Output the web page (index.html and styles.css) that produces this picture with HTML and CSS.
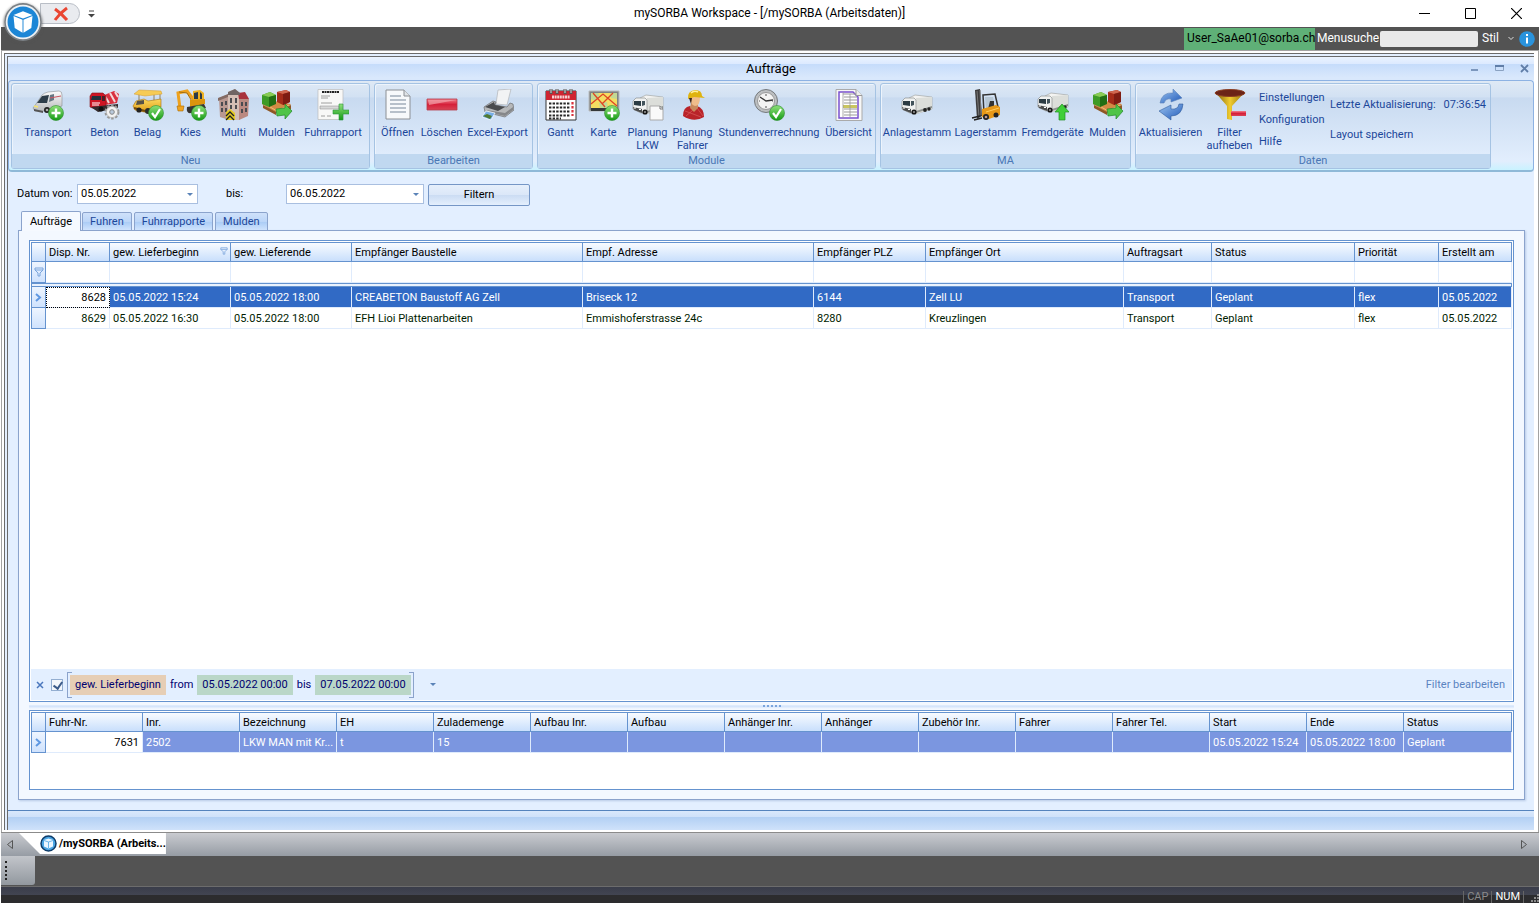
FILE: index.html
```html
<!DOCTYPE html>
<html lang="de">
<head>
    <meta charset="UTF-8">
    <title>mySORBA Workspace</title>
    <link rel="stylesheet" href="styles.css">
</head>
<body>
    <!-- icon sprite -->
    <svg class="sprite" width="0" height="0" aria-hidden="true">
        <defs>
            <linearGradient id="gGreen" x1="0" y1="0" x2="0" y2="1"><stop offset="0" stop-color="#8fe07a"/><stop offset="1" stop-color="#149a14"/></linearGradient>
            <linearGradient id="gRed" x1="0" y1="0" x2="0" y2="1"><stop offset="0" stop-color="#f2808c"/><stop offset=".5" stop-color="#d6203a"/><stop offset="1" stop-color="#d84455"/></linearGradient>
            <linearGradient id="gBlue" x1="0" y1="0" x2="1" y2="1"><stop offset="0" stop-color="#9cc4f0"/><stop offset="1" stop-color="#1f58b8"/></linearGradient>
            <linearGradient id="gGray" x1="0" y1="0" x2="0" y2="1"><stop offset="0" stop-color="#fdfdfd"/><stop offset="1" stop-color="#b8babd"/></linearGradient>
            <linearGradient id="gGold" x1="0" y1="0" x2="1" y2="0"><stop offset="0" stop-color="#7a5a05"/><stop offset=".5" stop-color="#f0cc30"/><stop offset="1" stop-color="#8a6a08"/></linearGradient>
            <linearGradient id="gYellow" x1="0" y1="0" x2="0" y2="1"><stop offset="0" stop-color="#fbd85e"/><stop offset="1" stop-color="#e09a12"/></linearGradient>
            <g id="bPlus"><circle cx="24" cy="24" r="7.5" fill="url(#gGreen)" stroke="#2f8f2f" stroke-width=".6"/><path d="M24 19.5v9M19.5 24h9" stroke="#fff" stroke-width="2.4"/></g>
            <g id="bCheck"><circle cx="24" cy="24" r="7.5" fill="url(#gGreen)" stroke="#2f8f2f" stroke-width=".6"/><path d="M20 24l3 4 5-8" stroke="#fff" stroke-width="2.2" fill="none"/></g>
            <g id="truckBody"><path d="M8 9l6-3 17 2v12l-17 5-6-4z" fill="#f4f4f2" stroke="#a3a6a5" stroke-width=".7"/><path d="M15 9l16-1v12l-16 5z" fill="#dcdeda"/><path d="M15 22l16-5v2l-16 5z" fill="#8f9391"/><path d="M1 12l3-3h9l2 2v12l-6 1-8-4z" fill="#f0f1f0" stroke="#8d9190" stroke-width=".7"/><path d="M2 12h7v5l-7-1z" fill="#2b3b43"/><path d="M10 12h3v4l-3 1z" fill="#42535b"/><path d="M1 18l9 2v4l-8-3z" fill="#4b4d4e"/><path d="M2 19h2M7 20.500h2" stroke="#fff"/><circle cx="13" cy="23" r="2.6" fill="#161616"/><circle cx="13" cy="23" r="1" fill="#999"/><circle cx="24" cy="21" r="1.9" fill="#222"/><circle cx="28" cy="20" r="1.7" fill="#222"/></g>
        </defs>
        <symbol id="van" viewBox="0 0 32 32"><path d="M1 19l3-4 6-9q2-2 6-3l11-1q3 0 3 4v11l-13 5-14 0z" fill="url(#gGray)" stroke="#8a8e92" stroke-width=".6"/><path d="M5 14l5-7 7-1-2 8z" fill="#2d3d49"/><path d="M18 6l4-1v6l-5 2z" fill="#667783"/><path d="M18 9l11-2" stroke="#cb5560"/><path d="M2 20l9 2v2l-9-2z" fill="#555"/><path d="M2 17l4 1" stroke="#f5e46e" stroke-width="1.5"/><circle cx="15" cy="21" r="3" fill="#222"/><circle cx="15" cy="21" r="1.3" fill="#aaa"/><use href="#bPlus"/></symbol>
        <symbol id="mixer" viewBox="0 0 32 32"><path d="M13 7l12-5 5 3-2 9-12 2z" fill="#d9303f"/><path d="M16 7l4 7M21 4l5 9M26 3l3 5" stroke="#f3d8d8" stroke-width="2"/><path d="M1 7l2-3h11l3 3v11l-11 2-5-2z" fill="#cf1524" stroke="#84101a" stroke-width=".6"/><path d="M3 7h9v4H2z" fill="#24313c"/><path d="M13 7h3v5h-3z" fill="#4a2026"/><path d="M3 14h8M3 16h7" stroke="#fff"/><path d="M2 18l27-3v4l-20 4z" fill="#332b2d"/><circle cx="12" cy="20" r="2.5" fill="#111"/><circle cx="23" cy="23" r="6" fill="#eee" stroke="#999" stroke-width="3" stroke-dasharray="2.4 1.4"/><circle cx="23" cy="23" r="5.6" fill="#f2f2f2" stroke="#aaa" stroke-width=".6"/><circle cx="23" cy="23" r="2.3" fill="#b9c9dc" stroke="#888"/></symbol>
        <symbol id="paver" viewBox="0 0 32 32"><path d="M7 5v9M22 5v10M28 4v10" stroke="#8f8060"/><path d="M2 5l5-4 22 1 1 3-17 2z" fill="#f6cb55" stroke="#d49a2a" stroke-width=".5"/><path d="M1 17l3-5 8-2 4 2 13-2v8l-12 6-14-3z" fill="url(#gYellow)" stroke="#a8710d" stroke-width=".6"/><path d="M5 12l7-1v4l-8 1z" fill="#575248"/><path d="M2 19l11 3" stroke="#754c0b" stroke-width="2"/><circle cx="7" cy="21" r="2.6" fill="#222"/><circle cx="16" cy="22" r="3" fill="#2c2c2c"/><use href="#bCheck"/></symbol>
        <symbol id="digger" viewBox="0 0 32 32"><path d="M5 19L3 4l9-2 7 9" fill="none" stroke="#eda11e" stroke-width="3"/><path d="M4 3l8 1 6 10" stroke="#a66d0b" fill="none"/><path d="M2 17h7l-1 5H3z" fill="#f0a31e" stroke="#a86b08" stroke-width=".6"/><path d="M18 2l7-1 4 3v8H18z" fill="#efb324"/><path d="M19 4l4-1v7h-4zM25 3l2 2v5h-2z" fill="#2e3b46"/><path d="M15 11l15-1v5l-15 3z" fill="#dc940d"/><path d="M12 18l17-3 2 4-15 5q-5 1-4-6z" fill="#383431"/><use href="#bPlus"/></symbol>
        <symbol id="house" viewBox="0 0 32 32"><path d="M1 9l10-4v26L2 28z" fill="#b99891"/><path d="M10 3l7-3 5 4v27H10z" fill="#d4bfb6"/><path d="M21 9l10 1-1 17-9 4z" fill="#ba8981"/><path d="M20 4l7-1 4 7-10 0z" fill="#a8323c"/><path d="M10 3l7-3 5 4v2H10z" fill="#6f6564"/><path d="M0 9l10-4v3L0 12z" fill="#836b64"/><path d="M3 13h2v4H3zM7 12h2v4H7zM3 19h2v4H3zM7 19h2v4H7zM12 9h2v5h-2zM17 9h2v5h-2zM12 16h2v4h-2zM17 16h2v4h-2zM23 13h2v4h-2zM27 13h2v4h-2zM23 20h2v4h-2zM27 19h2v4h-2z" fill="#4a4b51"/><path d="M8 23l4-3 5 4v7H8z" fill="#e4ca24"/><path d="M8 27l4-4 4 4M8 31l4-4 4 4" stroke="#222" fill="none" stroke-width="1.300"/></symbol>
        <symbol id="crates" viewBox="0 0 32 32"><path d="M1 15l12-3 17 3-4 5-12 4z" fill="#d28b45"/><path d="M2 16l13 7v3L2 19zM30 16l-14 7v3l14-6z" fill="#8e5725"/><path d="M4 15l12 7 12-6" stroke="#f0bc79" fill="none"/><path d="M16 3l9-2 4 2v10l-7 3-6-3z" fill="#a52c19"/><path d="M16 3l9-2 4 2-7 2z" fill="#cf6750"/><path d="M22 5l7-2v10l-7 3z" fill="#7e1c12"/><path d="M1 6l8-3 6 3v8l-7 4-7-3z" fill="#3d9b26"/><path d="M1 6l8-3 6 3-7 2z" fill="#8acc55"/><path d="M8 8l7-2v9l-7 3z" fill="#216e14"/><path d="M15 20l9-1v-4l7 7-7 8v-4l-8 1z" fill="#4fc448" stroke="#22862a" stroke-width=".7"/></symbol>
        <symbol id="invoice" viewBox="0 0 32 32"><path d="M1 .5h25v30H1z" fill="#f8f8f7" stroke="#bbb" stroke-width=".7"/><path d="M5 3h17" stroke="#222" stroke-width="2.2" stroke-dasharray="2 .5"/><path d="M4 7h9M4 9h7M4 14h11M4 27h4M10 27h4" stroke="#888" stroke-width=".8"/><path d="M3 17h19v3H3z" fill="#d7d8d8" stroke="#888" stroke-width=".5"/><path d="M22 15h4v6h6v4h-6v6h-4v-6h-6v-4h6z" fill="url(#gGreen)" stroke="#299341" stroke-width=".6"/></symbol>
        <symbol id="doc" viewBox="0 0 32 32"><path d="M4 1h18l6 6v23H4z" fill="#f7f9fb" stroke="#8c9095"/><path d="M22 1v6h6" fill="#dfe3e7" stroke="#8c9095"/><path d="M8 7h11M8 11h16M8 15h16M8 19h16M8 23h16" stroke="#a3adbb" stroke-width="1.5"/></symbol>
        <symbol id="minus" viewBox="0 0 32 32"><path d="M1 10h30v11H1z" fill="url(#gRed)" stroke="#b63a49" stroke-width=".8"/><path d="M2 11h28L3 16z" fill="#f2a1aa" opacity=".7"/></symbol>
        <symbol id="printer" viewBox="0 0 32 32"><path d="M16 1l13-1-4 16-11-1z" fill="#f2f3f4" stroke="#b2b4b7" stroke-width=".7"/><path d="M2 18l9-6 3 1-1 3 12 2 3-4 3 1 1 6-9 7-20-5z" fill="#b6b8ba" stroke="#6b6d70" stroke-width=".7"/><path d="M3 18l9-5 1 3 10 2-7 4z" fill="#494b4e"/><path d="M4 21l19 3 8-6v3l-8 6-9-2z" fill="#85878a"/><path d="M4 22l9 2-4 7-9-3z" fill="#78aee6" stroke="#fff" stroke-width=".7"/><path d="M1 27l4-2 5 2-2 3z" fill="#517a33"/></symbol>
        <symbol id="calendar" viewBox="0 0 32 32"><path d="M1 2h30v29H1z" fill="#fff" stroke="#333"/><path d="M1 2h30v9H1z" fill="#cf2431"/><path d="M7 8h18" stroke="#f5d1d3" stroke-width="3" stroke-dasharray="2 .6"/><path d="M6 0v5M12 0v5M20 0v5M26 0v5" stroke="#555" stroke-width="3"/><path d="M6 0v4M12 0v4M20 0v4M26 0v4" stroke="#ddd"/><path d="M4 14.500h21M4 18.500h21M4 22.500h21M4 26.500h21M4 29.500h12" stroke="#262626" stroke-width="2.2" stroke-dasharray="2.4 1.2"/><path d="M27.500 13v14" stroke="#d9323d" stroke-width="2.200" stroke-dasharray="2.600 1.400"/></symbol>
        <symbol id="map" viewBox="0 0 32 32"><path d="M1 2h30v20H1z" fill="#7e8283" stroke="#b9bcbe"/><path d="M3 4h26v15H3z" fill="#f5dd62"/><path d="M3 4h7l2 4-5 4-4-2zM22 4h7v6l-6-1zM11 14l8-1 1 6h-8z" fill="#c3d993"/><path d="M3 15L15 5l14 12M5 4l12 14M25 4L14 15" stroke="#df4524" fill="none" stroke-width="1.3"/><path d="M3 19h26v3H3z" fill="#353839"/><use href="#bPlus"/></symbol>
        <symbol id="truckDoc" viewBox="0 0 32 32"><use href="#truckBody"/><path d="M18 17h10l3 3v11H18z" fill="#fafafa" stroke="#aaa"/><path d="M28 17v3h3" fill="none" stroke="#777"/></symbol>
        <symbol id="worker" viewBox="0 0 32 32"><path d="M6 27q0-9 7-10l3 3 4-3q7 2 7 11-10 6-21-1z" fill="#b92329"/><path d="M8 22l16 6M20 19l6 8M9 27l7-6" stroke="#df6464" stroke-width=".6"/><path d="M14 14h7v5l-4 4-4-4z" fill="#c98a5d"/><path d="M13 8h10q0 9-5 9-5-1-5-9z" fill="#f0bd8b"/><path d="M11 10q-1-8 7-9 7 0 7 6l3 2-11-1z" fill="#dfb30f"/><path d="M14 4q3-3 7-1" stroke="#fff09b" fill="none" stroke-width="1.5"/><path d="M12 9l3 0-1 6z" fill="#33221d"/></symbol>
        <symbol id="clock" viewBox="0 0 32 32"><circle cx="13" cy="12" r="11.500" fill="#bcbfc1" stroke="#75797c"/><circle cx="13" cy="12" r="8.500" fill="#f4f4f3" stroke="#999"/><path d="M7 8l6 4 7-1" stroke="#333" stroke-width="1.300" fill="none"/><path d="M13 5v2M13 17v2M6 12h1M19 12h1" stroke="#555"/><use href="#bCheck"/></symbol>
        <symbol id="sheet" viewBox="0 0 32 32"><path d="M3 .500h20l6 6v25H3z" fill="#f7f7f7" stroke="#aaa"/><path d="M6 3v26h19V8l-5-5z" fill="#fff" stroke="#7950cf" stroke-width="1.500"/><path d="M10 5h15M11 8h13M11 11h13M11 14h13M11 20h13M11 23h13M11 26h13" stroke="#9a9a9a" stroke-width="1.200"/><path d="M10 16h14v3H10z" fill="#c9c560"/><path d="M10 3v26M17 5v23" stroke="#999" stroke-width=".8"/><path d="M23 .500v6h6" fill="#eee" stroke="#999"/></symbol>
        <symbol id="truck" viewBox="0 0 32 32"><use href="#truckBody"/></symbol>
        <symbol id="truckUp" viewBox="0 0 32 32"><use href="#truckBody" y="-2"/><path d="M25 15l7 8h-4v8h-6v-8h-4z" fill="#40cf38" stroke="#238f24" stroke-width=".7"/></symbol>
        <symbol id="forklift" viewBox="0 0 32 32"><path d="M5 1l5-1 2 27-5 3z" fill="#3c3c3d"/><path d="M7 2l2 26M10 1l1 25" stroke="#777"/><path d="M2 29l8-2M4 31l8-2" stroke="#222" stroke-width="1.500"/><path d="M13 6l12-1 3 13-3 6H14z" fill="none" stroke="#333" stroke-width="1.500"/><path d="M15 8h8l2 10-9 1z" fill="#b7c7d4"/><path d="M20 12h4v8h-6z" fill="#333"/><path d="M12 20l14-4 4 2v8l-11 4-7-2z" fill="#e79818"/><path d="M16 23l13-4" stroke="#ffcc5b"/><circle cx="16" cy="28" r="3" fill="#222"/><circle cx="16" cy="28" r="1.300" fill="#b99"/><circle cx="26" cy="26" r="2.500" fill="#222"/></symbol>
        <symbol id="refresh" viewBox="0 0 32 32"><path d="M5 14Q7 3 18 4V0l9 9-11 4v-3q-5-1-7 4z" fill="url(#gBlue)" stroke="#5b82b8" stroke-width=".6"/><path d="M28 15q-1 12-12 12v4l-12-9 12-6v4q7 1 8-5z" fill="url(#gBlue)" stroke="#315d9c" stroke-width=".6"/></symbol>
        <symbol id="funnel" viewBox="0 0 32 32"><path d="M1 3l12 14v13l5 1V17L31 3z" fill="url(#gGold)"/><ellipse cx="16" cy="4" rx="15" ry="3.500" fill="#6b2417" stroke="#8b3f22"/><path d="M17 22h15v5H17z" fill="url(#gRed)"/></symbol>
        <symbol id="cube" viewBox="0 0 32 32"><circle cx="16" cy="16" r="15.200" fill="#eef1f4" stroke="#7b8085" stroke-width="1.400"/><circle cx="16" cy="16" r="13" fill="#1c86d6"/><path d="M8 10l8-3 8 3-8 3z" fill="#fff"/><path d="M8 11l7.600 3v11l-6.600-4zM24 11l-7.600 3v11l6.600-4z" fill="#fff"/></symbol>
        <symbol id="cubeSmall" viewBox="0 0 17 17"><circle cx="8.500" cy="8.500" r="7.500" fill="#4aa5e4" stroke="#0e3c69" stroke-width="1.500"/><path d="M4 5l4.500-1.500L13 5v6.500L8.500 13.500 4 11.500z" fill="#eaf6ff"/><path d="M4 5.500L8.500 7 13 5.500M8.500 7v6" stroke="#4aa5e4" stroke-width=".8" fill="none"/></symbol>
        <symbol id="filter" viewBox="0 0 10 10"><path d="M1 1h8v2L6 6v3H4V6L1 3z" fill="none" stroke="#7ba5dc"/><path d="M1 3h8" stroke="#7ba5dc"/></symbol>
    </svg>

    <header class="titlebar">
        <div class="quick">
            <button class="quick-close" aria-label="Schliessen"><svg width="16" height="16" viewBox="0 0 16 16"><path d="M2 3q7 5 12 11M14 2Q7 7 2 14" stroke="#ea4632" stroke-width="3" fill="none"/></svg></button>
        </div>
        <button class="quick-more" aria-label="Mehr"><svg width="7" height="8" viewBox="0 0 7 8"><path d="M1 1h5" stroke="#444"/><path d="M0 4h7L3.500 7.500z" fill="#444"/></svg></button>
        <h1>mySORBA Workspace - [/mySORBA (Arbeitsdaten)]</h1>
        <div class="winbtns">
            <button aria-label="Minimieren"><svg width="11" height="11"><path d="M0 5.500h11" stroke="#000"/></svg></button>
            <button aria-label="Maximieren"><svg width="11" height="11"><path d="M.5.5h10v10H.5z" fill="none" stroke="#000"/></svg></button>
            <button aria-label="Beenden"><svg width="11" height="11"><path d="M0 0l11 11M11 0L0 11" stroke="#000" stroke-width="1.200"/></svg></button>
        </div>
        <button class="orb" aria-label="Menu"><svg width="38" height="38"><use href="#cube"/></svg></button>
    </header>

    <div class="menubar">
        <span class="user">User_SaAe01@sorba.ch</span>
        <label for="search">Menusuche</label>
        <input id="search" type="text">
        <button class="stil">Stil<svg width="6" height="5" viewBox="0 0 6 5"><path d="M.5 1L3 3.500 5.500 1" fill="none" stroke="#ddd"/></svg></button>
        <button aria-label="Info"><svg width="16" height="16"><circle cx="8" cy="8" r="7.800" fill="#2a93dd"/><path d="M8 6.500v6M8 3v2" stroke="#fff" stroke-width="2"/></svg></button>
    </div>

    <div class="frame">
        <main class="window">
            <div class="window-head">
                <h2>Aufträge</h2>
                <div class="mdibtns">
                    <button aria-label="Minimieren"><svg width="9" height="9"><path d="M1 6h7" stroke="#607ea8" stroke-width="1.500"/></svg></button>
                    <button aria-label="Wiederherstellen"><svg width="9" height="9"><path d="M.5 1.500h8v5h-8z" fill="none" stroke="#8aa2c2"/><path d="M0 2h9" stroke="#607ea8" stroke-width="2"/></svg></button>
                    <button aria-label="Schliessen"><svg width="9" height="9"><path d="M1 1l7 7M8 1L1 8" stroke="#607ea8" stroke-width="1.800"/></svg></button>
                </div>
            </div>

            <nav class="ribbon">
                <section class="group">
                    <div class="items">
                        <button class="w-l"><svg><use href="#van"/></svg>Transport</button>
                        <button><svg><use href="#mixer"/></svg>Beton</button>
                        <button><svg><use href="#paver"/></svg>Belag</button>
                        <button><svg><use href="#digger"/></svg>Kies</button>
                        <button><svg><use href="#house"/></svg>Multi</button>
                        <button><svg><use href="#crates"/></svg>Mulden</button>
                        <button class="w-l"><svg><use href="#invoice"/></svg>Fuhrrapport</button>
                    </div>
                    <h3>Neu</h3>
                </section>
                <section class="group">
                    <div class="items">
                        <button><svg><use href="#doc"/></svg>Öffnen</button>
                        <button class="w-s"><svg><use href="#minus"/></svg>Löschen</button>
                        <button class="w-k"><svg><use href="#printer"/></svg>Excel-Export</button>
                    </div>
                    <h3>Bearbeiten</h3>
                </section>
                <section class="group">
                    <div class="items">
                        <button><svg><use href="#calendar"/></svg>Gantt</button>
                        <button><svg><use href="#map"/></svg>Karte</button>
                        <button class="w-s"><svg><use href="#truckDoc"/></svg>Planung<br>LKW</button>
                        <button class="w-s"><svg><use href="#worker"/></svg>Planung<br>Fahrer</button>
                        <button class="w-xl"><svg><use href="#clock"/></svg>Stundenverrechnung</button>
                        <button class="w-m"><svg><use href="#sheet"/></svg>Übersicht</button>
                    </div>
                    <h3>Module</h3>
                </section>
                <section class="group">
                    <div class="items">
                        <button class="w-l"><svg><use href="#truck"/></svg>Anlagestamm</button>
                        <button class="w-k"><svg><use href="#forklift"/></svg>Lagerstamm</button>
                        <button class="w-k"><svg><use href="#truckUp"/></svg>Fremdgeräte</button>
                        <button><svg><use href="#crates"/></svg>Mulden</button>
                    </div>
                    <h3>MA</h3>
                </section>
                <section class="group">
                    <div class="items">
                        <button class="w-k"><svg><use href="#refresh"/></svg>Aktualisieren</button>
                        <button class="w-m"><svg><use href="#funnel"/></svg>Filter<br>aufheben</button>
                        <div class="links">
                            <a href="#">Einstellungen</a>
                            <a href="#">Konfiguration</a>
                            <a href="#">Hilfe</a>
                        </div>
                        <div class="links wide">
                            <span class="update">Letzte Aktualisierung:<span>07:36:54</span></span>
                            <a href="#">Layout speichern</a>
                        </div>
                    </div>
                    <h3>Daten</h3>
                </section>
            </nav>

            <form class="dates" onsubmit="return false">
                <label for="von">Datum von:</label>
                <div class="combo von"><input id="von" type="text" value="05.05.2022"><button aria-label="Kalender öffnen"></button></div>
                <label class="bis-label" for="bis">bis:</label>
                <div class="combo bis"><input id="bis" type="text" value="06.05.2022"><button aria-label="Kalender öffnen"></button></div>
                <button class="filtern">Filtern</button>
            </form>

            <div class="tabs">
                <button class="active">Aufträge</button>
                <button>Fuhren</button>
                <button>Fuhrrapporte</button>
                <button>Mulden</button>
            </div>

            <div class="panel">
                <div class="grid orders">
                    <div class="grid-body">
                        <table>
                            <colgroup>
                                <col class="c15"><col class="c64"><col class="c121"><col class="c121"><col class="c231"><col class="c231"><col class="c112"><col class="c198"><col class="c88"><col class="c143"><col class="c84"><col>
                            </colgroup>
                            <thead>
                                <tr><th></th><th>Disp. Nr.</th><th class="filtered">gew. Lieferbeginn<svg width="8" height="8"><use href="#filter"/></svg></th><th>gew. Lieferende</th><th>Empfänger Baustelle</th><th>Empf. Adresse</th><th>Empfänger PLZ</th><th>Empfänger Ort</th><th>Auftragsart</th><th>Status</th><th>Priorität</th><th>Erstellt am</th></tr>
                                <tr class="filter-row"><td class="mark"><svg width="10" height="10"><use href="#filter"/></svg></td><td></td><td></td><td></td><td></td><td></td><td></td><td></td><td></td><td></td><td></td><td></td></tr>
                                <tr class="divider"><td colspan="12"></td></tr>
                            </thead>
                            <tbody>
                                <tr class="selected"><td class="mark"><svg width="7" height="9"><path d="M1 1l4 3.500L1 8" fill="none" stroke="#5f98e2" stroke-width="2"/></svg></td><td class="num focus">8628</td><td>05.05.2022 15:24</td><td>05.05.2022 18:00</td><td>CREABETON Baustoff AG Zell</td><td>Briseck 12</td><td>6144</td><td>Zell LU</td><td>Transport</td><td>Geplant</td><td>flex</td><td>05.05.2022</td></tr>
                                <tr><td class="mark"></td><td class="num">8629</td><td>05.05.2022 16:30</td><td>05.05.2022 18:00</td><td>EFH Lioi Plattenarbeiten</td><td>Emmishoferstrasse 24c</td><td>8280</td><td>Kreuzlingen</td><td>Transport</td><td>Geplant</td><td>flex</td><td>05.05.2022</td></tr>
                            </tbody>
                        </table>
                    </div>
                    <div class="criteria">
                        <button aria-label="Filter entfernen"><svg width="8" height="8"><path d="M1 1l6 6M7 1L1 7" stroke="#4a77bd" stroke-width="1.500"/></svg></button>
                        <input type="checkbox" aria-label="Filter aktiv" checked>
                        <div class="bracket">
                            <span class="token field">gew. Lieferbeginn</span>
                            <span class="word">from</span>
                            <span class="token">05.05.2022 00:00</span>
                            <span class="word">bis</span>
                            <span class="token">07.05.2022 00:00</span>
                        </div>
                        <button class="drop" aria-label="Letzte Filter"></button>
                        <a href="#">Filter bearbeiten</a>
                    </div>
                </div>

                <div class="splitter"><i></i><i></i><i></i><i></i><i></i></div>

                <div class="grid trips">
                    <table>
                        <colgroup>
                            <col class="c15"><col span="14" class="c97"><col>
                        </colgroup>
                        <thead>
                            <tr><th></th><th>Fuhr-Nr.</th><th>Inr.</th><th>Bezeichnung</th><th>EH</th><th>Zulademenge</th><th>Aufbau Inr.</th><th>Aufbau</th><th>Anhänger Inr.</th><th>Anhänger</th><th>Zubehör Inr.</th><th>Fahrer</th><th>Fahrer Tel.</th><th>Start</th><th>Ende</th><th>Status</th></tr>
                        </thead>
                        <tbody>
                            <tr class="selected"><td class="mark"><svg width="7" height="9"><path d="M1 1l4 3.500L1 8" fill="none" stroke="#5f98e2" stroke-width="2"/></svg></td><td class="num focus">7631</td><td>2502</td><td>LKW MAN mit Kr...</td><td>t</td><td>15</td><td></td><td></td><td></td><td></td><td></td><td></td><td></td><td>05.05.2022 15:24</td><td>05.05.2022 18:00</td><td>Geplant</td></tr>
                        </tbody>
                    </table>
                </div>
            </div>
            <div class="window-foot"></div>
        </main>
    </div>

    <div class="doctabs">
        <button class="scroll" aria-label="Zurück"><svg width="6" height="9"><path d="M5.500.500v8L.500 4.500z" fill="none" stroke="#555"/></svg></button>
        <button class="doctab"><svg width="17" height="17"><use href="#cubeSmall"/></svg>/mySORBA (Arbeits...</button>
        <button class="scroll next" aria-label="Vor"><svg width="6" height="9"><path d="M.500.500v8l5-4z" fill="none" stroke="#555"/></svg></button>
    </div>
    <div class="toolrow"><div class="grip"></div></div>
    <footer class="statusbar">
        <span class="off">CAP</span>
        <span>NUM</span>
        <svg width="10" height="10"><path d="M8 2h2M5 5h2M8 5h2M2 8h2M5 8h2M8 8h2" stroke="#aaa" stroke-width="1.500"/></svg>
    </footer>
</body>
</html>
```
FILE: styles.css
```css
* {
    box-sizing: border-box;
    margin: 0;
    padding: 0;
}
html, body {
    height: 100%;
}
body {
    display: flex;
    flex-direction: column;
    overflow: hidden;
    background: #fff;
    color: #000;
    font: 11px/13px Roboto, "Noto Sans", sans-serif;
}
button {
    border: none;
    background: none;
    color: inherit;
    font: inherit;
}
input {
    font: inherit;
}
a {
    color: inherit;
    text-decoration: none;
}
svg {
    display: block;
    flex: none;
}
.sprite {
    position: absolute;
}

/* title bar */
.titlebar {
    position: relative;
    display: flex;
    align-items: center;
    height: 27px;
    flex: none;
    padding-left: 40px;
}
.quick {
    width: 40px;
    height: 21px;
    border: 1px solid #b9bec6;
    border-radius: 0 11px 11px 0;
    background: #e9ebef;
}
.quick-close {
    margin: 2px 0 0 12px;
}
.quick-more {
    margin-left: 8px;
}
.titlebar h1 {
    position: absolute;
    left: 0;
    right: 0;
    text-align: center;
    font-size: 12px;
    font-weight: normal;
    pointer-events: none;
}
.winbtns {
    display: flex;
    margin-left: auto;
}
.winbtns button {
    width: 46px;
    height: 26px;
    padding-left: 18px;
}
.orb {
    position: absolute;
    left: 4px;
    top: 3px;
    z-index: 2;
    border-radius: 50%;
    box-shadow: 0 1px 3px #555;
}

/* menu bar */
.menubar {
    display: flex;
    flex: none;
    align-items: center;
    justify-content: flex-end;
    height: 23px;
    margin-left: 1px;
    padding-right: 4px;
    background: #535353;
    color: #fff;
    font-size: 12px;
}
.user {
    height: 22px;
    width: 131px;
    padding: 4px 0 0 3px;
    background: #5fb077;
    color: #000;
    white-space: nowrap;
}
.menubar label {
    width: 65px;
    padding-left: 2px;
}
.menubar input {
    width: 98px;
    height: 16px;
    border: none;
    border-radius: 2px;
    background: #e9e9e9;
}
.stil {
    display: flex;
    align-items: center;
    justify-content: space-between;
    width: 32px;
    margin: 0 5px 0 4px;
}

/* document window */
.frame {
    display: flex;
    flex: 1;
    min-height: 0;
    margin-left: 1px;
    padding: 2px 4px 2px 2px;
    border: 1px solid #a3a3a3;
    border-bottom: none;
}
.window {
    display: flex;
    flex: 1;
    flex-direction: column;
    min-width: 0;
    border: 4px double #6b6b6b;
    border-right: none;
    border-bottom: none;
    background: #e3efff;
}
.window-head {
    position: relative;
    display: flex;
    align-items: center;
    justify-content: flex-end;
    flex: none;
    height: 23px;
    padding-right: 5px;
    background: linear-gradient(#eaf3ff 0, #dceaff 30%, #c5dcfb 31%, #d9e8fc 90%);
}
.window-head h2 {
    position: absolute;
    left: 0;
    right: 0;
    text-align: center;
    font-size: 13px;
    font-weight: normal;
}
.mdibtns {
    position: relative;
    display: flex;
    gap: 16px;
}

/* ribbon */
.ribbon {
    display: flex;
    flex: none;
    gap: 4px;
    height: 92px;
    padding: 2px;
    border: 1px solid #8db2e3;
    border-bottom: 2px solid #8fb9d8;
    border-radius: 4px;
    background: linear-gradient(#dfe9f5 0, #d2e1f3 18%, #c8daf0 19%, #e2eefd 90%, #c9f2ff);
    color: #1c479a;
}
.group {
    display: flex;
    flex-direction: column;
    height: 86px;
    padding: 0 1px;
    border: 1px solid #a5c3e3;
    border-radius: 3px;
    box-shadow: inset 1px 1px #edf4fc;
}
.items {
    display: flex;
    flex: 1;
    padding-top: 5px;
}
.items button {
    width: 43px;
    display: flex;
    flex-direction: column;
    align-items: center;
    white-space: nowrap;
}
.items button svg {
    width: 32px;
    height: 32px;
    margin-bottom: 5px;
}
.items .w-s { width: 45px; }
.items .w-m { width: 51px; }
.items .w-k { width: 67px; }
.items .w-l { width: 70px; }
.items .w-xl { width: 108px; }
.group h3 {
    height: 14px;
    margin: 0 -1px;
    background: #c0d8f0;
    color: #4a77b5;
    font-size: 11px;
    font-weight: normal;
    text-align: center;
}
.links {
    display: flex;
    flex-direction: column;
    gap: 9px;
    width: 71px;
    padding: 2px 0 0 4px;
    white-space: nowrap;
}
.links.wide {
    gap: 17px;
    width: 163px;
    padding-top: 9px;
}
.update {
    display: flex;
    justify-content: space-between;
    padding-right: 3px;
}

/* date filter */
.dates {
    display: flex;
    flex: none;
    padding: 12px 9px 5px;
    line-height: 20px;
}
.combo {
    display: flex;
    align-items: center;
    height: 20px;
    border: 1px solid #a9bfe0;
    background: #fff;
}
.combo input {
    flex: 1;
    min-width: 0;
    padding-left: 3px;
    border: none;
    background: none;
}
.combo button, .drop {
    width: 14px;
    height: 14px;
}
.combo button::before, .drop::before {
    content: "";
    display: block;
    width: 0;
    margin: 0 auto;
    border: 3px solid transparent;
    border-top-color: #5b83b8;
    border-bottom: none;
}
.dates label {
    width: 60px;
    white-space: nowrap;
}
.combo.von { width: 121px; }
.combo.bis { width: 138px; }
.dates .bis-label {
    width: 88px;
    padding-left: 28px;
}
.filtern {
    width: 102px;
    height: 22px;
    margin-left: 4px;
    border: 1px solid #7596c6;
    border-radius: 2px;
    background: linear-gradient(#e6effb 0, #dbe7f8 50%, #cbdcf3 51%, #e4effd);
}

/* tabs */
.tabs {
    position: relative;
    display: flex;
    flex: none;
    align-items: flex-end;
    gap: 2px;
    height: 20px;
    margin: 0 0 -1px 13px;
}
.tabs button {
    height: 19px;
    padding: 0 7px;
    border: 1px solid #8ba3cc;
    border-radius: 2px 2px 0 0;
    background: linear-gradient(#cfe1fa, #bcd6f8 50%, #a9cbf5 51%, #cfe3fd);
    color: #1c479a;
}
.tabs .active {
    height: 20px;
    margin-right: -1px;
    padding: 0 8px;
    border-bottom: none;
    background: #f5f9ff;
    color: #000;
}
.panel {
    display: flex;
    flex: 1;
    flex-direction: column;
    min-height: 0;
    margin: 0 9px 10px 10px;
    padding: 9px 10px;
    border: 1px solid #8ba3cc;
    background: #f3f8ff;
    box-shadow: 1px 1px 2px #b9cbe6;
}
.window-foot {
    flex: none;
    height: 20px;
    border-top: 1px solid #5583bd;
    background: linear-gradient(#d9e8fc 0, #cfe1fa 30%, #b2cff4 31%, #cfe2fa);
}

/* grids */
.grid {
    display: flex;
    flex-direction: column;
    padding: 1px;
    border: 1px solid #6593cf;
    background: #fff;
}
.orders {
    flex: 1;
    min-height: 0;
}
.grid-body {
    flex: 1;
}
.trips {
    flex: none;
    height: 80px;
}
table {
    width: 100%;
    table-layout: fixed;
    border-spacing: 0;
}
.c15 { width: 15px; }
.c64 { width: 64px; }
.c84 { width: 84px; }
.c88 { width: 88px; }
.c97 { width: 97px; }
.c112 { width: 112px; }
.c121 { width: 121px; }
.c143 { width: 143px; }
.c198 { width: 198px; }
.c231 { width: 231px; }
th {
    position: relative;
    height: 20px;
    padding: 0 3px;
    border: 1px solid #6593cf;
    border-left: none;
    background: linear-gradient(#f8fbff, #c9dffc);
    font-weight: normal;
    text-align: left;
    white-space: nowrap;
}
th:first-child, .mark {
    border-left: 1px solid #6593cf;
}
.filtered svg {
    position: absolute;
    top: 4px;
    right: 2px;
}
td {
    height: 21px;
    padding: 0 3px;
    border-right: 1px solid #dfebfc;
    border-bottom: 1px solid #dfebfc;
    color: #001c00;
    white-space: nowrap;
    overflow: hidden;
}
td.mark {
    padding: 0 3px;
    border-right-color: #6593cf;
    border-bottom-color: #6593cf;
    background: linear-gradient(#eef5ff, #cfe2fd);
}
.filter-row .mark {
    padding: 0 2px;
}
.divider td {
    height: 4px;
    padding: 0;
    border: 1px solid #6593cf;
    background: #eaf2fe;
}
.num {
    text-align: right;
}
.selected td:not(.mark) {
    background: #316ac5;
    color: #fff;
}
.trips .selected td:not(.mark) {
    background: #7b96e0;
}
.selected td.focus:not(.mark), .trips .selected td.focus:not(.mark) {
    background: #fff;
    color: #000;
}
.orders .focus {
    outline: 1px dotted #000;
    outline-offset: -1px;
}

/* filter criteria line */
.criteria {
    display: flex;
    flex: none;
    align-items: center;
    height: 31px;
    padding: 0 7px 0 5px;
    background: #e3efff;
    color: #00006e;
}
.criteria input {
    appearance: none;
    width: 12px;
    height: 12px;
    margin: 1px 4px 0 7px;
    border: 1px solid #93aed1;
    background: #f4f7fb;
}
.criteria input:checked::after {
    content: "";
    display: block;
    width: 4px;
    height: 7px;
    margin: 0 0 0 3px;
    border: solid #3d5c8a;
    border-width: 0 2px 2px 0;
    transform: rotate(35deg);
}
.bracket {
    position: relative;
    display: flex;
    align-items: center;
    height: 26px;
    padding: 0 3px;
    line-height: 20px;
}
.bracket::before, .bracket::after {
    content: "";
    position: absolute;
    top: 0;
    bottom: 0;
    width: 4px;
    border: 1px solid #8ba3cc;
}
.bracket::before {
    left: 0;
    border-right: none;
}
.bracket::after {
    right: 0;
    border-left: none;
}
.token {
    padding: 0 5px;
    background: #bad7c8;
}
.token.field {
    background: #e6ceb5;
}
.word {
    padding: 0 4px;
}
.drop {
    margin-left: 12px;
}
.criteria a {
    margin-left: auto;
    color: #5b83bf;
}
.splitter {
    display: flex;
    flex: none;
    justify-content: center;
    gap: 2px;
    height: 8px;
    padding-top: 3px;
    background: linear-gradient(#f3f8ff 35%, #cfe1fa 50%, #f3f8ff 85%);
}
.splitter i {
    width: 2px;
    height: 2px;
    background: #7ba5dc;
}

/* document tabs */
.doctabs {
    display: flex;
    flex: none;
    align-items: center;
    height: 24px;
    margin-left: 1px;
    border-top: 1px solid #8b8b8b;
    background: linear-gradient(#c9cbd0, #969ca4);
}
.scroll {
    padding: 0 6px;
}
.scroll.next {
    margin-left: auto;
    padding-right: 12px;
}
.doctab {
    display: flex;
    align-self: flex-start;
    align-items: center;
    gap: 2px;
    height: 21px;
    padding: 0 0 0 21px;
    background: #fff;
    clip-path: polygon(0 0, 100% 0, 100% 100%, 21px 100%);
    font-weight: bold;
}
.toolrow {
    flex: none;
    height: 31px;
    margin-left: 1px;
    border-bottom: 1px solid #6c6c6c;
    background: #535353;
}
.grip {
    width: 34px;
    height: 29px;
    padding: 5px 4px;
    border-radius: 0 0 3px 0;
    background: linear-gradient(#c2c5ca, #92989f);
}
.grip::before {
    content: "";
    display: block;
    height: 19px;
    border-left: 2px dotted #222;
}
.statusbar {
    display: flex;
    flex: none;
    align-items: flex-end;
    height: 16px;
    margin-left: 1px;
    background: linear-gradient(#3a3d4a 0, #424552 50%, #2c2c2e 51%);
    color: #fff;
    line-height: 12px;
}
.statusbar span {
    padding: 0 3px;
    border-right: 1px solid #666;
}
.statusbar .off {
    margin-left: auto;
    border-left: 1px solid #666;
    color: #8a8a8a;
}
.statusbar svg {
    margin-left: 5px;
}
```
